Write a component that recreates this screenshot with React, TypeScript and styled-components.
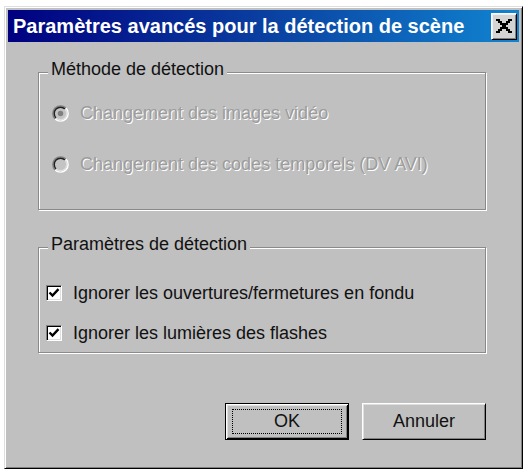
import React from "react";
import styled, { createGlobalStyle, css } from "styled-components";

const Global = createGlobalStyle`
  html, body { margin: 0; padding: 0; background: #ffffff; }
  body { font-family: "Liberation Sans", Arial, sans-serif; }
`;

const Window = styled.div`
  box-sizing: border-box;
  margin: 6px 0 0 4px;
  width: 519px;
  height: 463px;
  background: #c0c0c0;
  border: 1px solid;
  border-color: #dfdfdf #000000 #000000 #dfdfdf;
  box-shadow: inset 1px 1px 0 #ffffff, inset -1px -1px 0 #808080;
  padding: 3px;
  display: flex;
  flex-direction: column;
`;

const TitleBar = styled.div`
  height: 32px;
  flex: none;
  display: flex;
  align-items: center;
  padding: 0 2px 0 5px;
  background: linear-gradient(90deg, #000080 0%, #0a3fa0 50%, #1084d0 100%);
`;

const Title = styled.div`
  color: #ffffff;
  font-weight: bold;
  font-size: 20px;
  line-height: 24px;
  white-space: nowrap;
`;

const CloseButton = styled.div`
  margin-left: auto;
  box-sizing: border-box;
  width: 26px;
  height: 27px;
  background: #d4d4d4;
  border: 1px solid;
  border-color: #ffffff #000000 #000000 #ffffff;
  box-shadow: inset 1px 1px 0 #efefef, inset -1px -1px 0 #808080;
  display: flex;
  align-items: center;
  justify-content: center;
`;

const Body = styled.div`
  flex: 1;
  display: flex;
  flex-direction: column;
  padding: 30px 33px 0 30px;
`;

const Frame = styled.div<{ $pad: string; $gap: number; $top?: number }>`
  position: relative;
  border: 1px solid #8a8a8a;
  box-shadow: inset 1px 1px 0 #ffffff, 1px 1px 0 #ffffff;
  padding: ${(p) => p.$pad};
  margin-top: ${(p) => p.$top ?? 0}px;
  display: flex;
  flex-direction: column;
  gap: ${(p) => p.$gap}px;
`;

const Caption = styled.span`
  position: absolute;
  top: -14px;
  left: 9px;
  padding: 0 3px;
  background: #c0c0c0;
  color: #111111;
  font-size: 18px;
  line-height: 20px;
  white-space: nowrap;
`;

const Row = styled.div<{ $indent?: number }>`
  display: flex;
  align-items: center;
  gap: 11px;
  height: 20px;
  margin-left: ${(p) => p.$indent ?? 0}px;
`;

const Label = styled.span<{ $disabled?: boolean }>`
  font-size: 18px;
  line-height: 20px;
  white-space: nowrap;
  color: #111111;
  ${(p) =>
    p.$disabled &&
    css`
      color: #9c9c9c;
      text-shadow: 1px 1px 0 #ffffff;
    `}
`;

const CheckBox = styled.span`
  box-sizing: border-box;
  width: 16px;
  height: 16px;
  flex: none;
  background: #ffffff;
  border: 1px solid;
  border-color: #808080 #ffffff #ffffff #808080;
  box-shadow: inset 1px 1px 0 #000000, inset -1px -1px 0 #dfdfdf;
  display: flex;
  align-items: center;
  justify-content: center;
`;

const RadioIcon = styled.svg`
  width: 17px;
  height: 17px;
  flex: none;
`;

const ButtonRow = styled.div`
  margin-top: 50px;
  display: flex;
  justify-content: flex-end;
  gap: 13px;
`;

const Button = styled.div<{ $default?: boolean }>`
  box-sizing: border-box;
  width: 124px;
  height: 37px;
  background: #c0c0c0;
  display: flex;
  align-items: center;
  justify-content: center;
  font-size: 18px;
  color: #111111;
  border: 1px solid;
  border-color: #ffffff #000000 #000000 #ffffff;
  box-shadow: inset 1px 1px 0 #dfdfdf, inset -1px -1px 0 #808080;
  ${(p) =>
    p.$default &&
    css`
      border: 1px solid #000000;
      box-shadow: inset 1px 1px 0 #ffffff, inset -1px -1px 0 #000000,
        inset 2px 2px 0 #dfdfdf, inset -2px -2px 0 #808080;
    `}
`;

const FocusRect = styled.span`
  box-sizing: border-box;
  width: 110px;
  height: 25px;
  border: 1px dotted #000000;
  display: flex;
  align-items: center;
  justify-content: center;
`;

function Radio({ checked }: { checked?: boolean }) {
  const arc = (r: number) => {
    const d = r * 0.7071;
    return {
      tl: `M ${8 - d} ${8 + d} A ${r} ${r} 0 0 1 ${8 + d} ${8 - d}`,
      br: `M ${8 + d} ${8 - d} A ${r} ${r} 0 0 1 ${8 - d} ${8 + d}`,
    };
  };
  const o = arc(7.2);
  const i = arc(5.9);
  return (
    <RadioIcon viewBox="0 0 16 16">
      <circle cx="8" cy="8" r="5.5" fill="#c4c4c4" />
      <path d={o.tl} stroke="#808080" strokeWidth="1.4" fill="none" />
      <path d={o.br} stroke="#ffffff" strokeWidth="1.4" fill="none" />
      <path d={i.tl} stroke="#202020" strokeWidth="1.3" fill="none" />
      <path d={i.br} stroke="#dfdfdf" strokeWidth="1.3" fill="none" />
      {checked && <circle cx="8" cy="8" r="2.6" fill="#808080" />}
    </RadioIcon>
  );
}

function Check() {
  return (
    <CheckBox>
      <svg width="12" height="12" viewBox="0 0 12 12">
        <polyline
          points="1.5,5.5 4.5,8.5 10.5,2.2"
          fill="none"
          stroke="#000000"
          strokeWidth="2.4"
        />
      </svg>
    </CheckBox>
  );
}

export default function App() {
  return (
    <>
      <Global />
      <Window>
        <TitleBar>
          <Title>Paramètres avancés pour la détection de scène</Title>
          <CloseButton>
            <svg width="16" height="14" viewBox="0 0 8 7" shapeRendering="crispEdges">
              <path
                fill="#000000"
                d="M0 0h2v1h-2z M6 0h2v1h-2z M1 1h2v1h-2z M5 1h2v1h-2z M2 2h4v1h-4z M3 3h2v1h-2z M2 4h4v1h-4z M1 5h2v1h-2z M5 5h2v1h-2z M0 6h2v1h-2z M6 6h2v1h-2z"
              />
            </svg>
          </CloseButton>
        </TitleBar>
        <Body>
          <Frame $pad="30px 12px 35px 0" $gap={31}>
            <Caption>Méthode de détection</Caption>
            <Row $indent={13}>
              <Radio checked />
              <Label $disabled>Changement des images vidéo</Label>
            </Row>
            <Row $indent={13}>
              <Radio />
              <Label $disabled>Changement des codes temporels (DV AVI)</Label>
            </Row>
          </Frame>
          <Frame $pad="35px 12px 9px 0" $gap={20} $top={37}>
            <Caption>Paramètres de détection</Caption>
            <Row $indent={7}>
              <Check />
              <Label>Ignorer les ouvertures/fermetures en fondu</Label>
            </Row>
            <Row $indent={7}>
              <Check />
              <Label>Ignorer les lumières des flashes</Label>
            </Row>
          </Frame>
          <ButtonRow>
            <Button $default>
              <FocusRect>OK</FocusRect>
            </Button>
            <Button>Annuler</Button>
          </ButtonRow>
        </Body>
      </Window>
    </>
  );
}
